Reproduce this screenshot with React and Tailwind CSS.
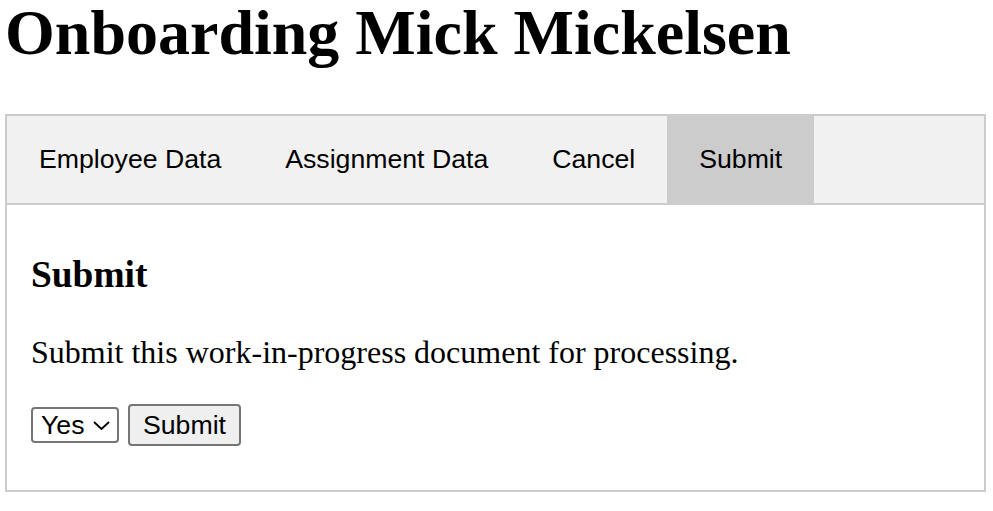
import React, { useState } from "react";

const tabs = ["Employee Data", "Assignment Data", "Cancel", "Submit"];

export default function App() {
  const [active, setActive] = useState("Submit");
  return (
    <div className="min-h-[511px] bg-white px-[5px] text-black font-['Liberation_Serif',serif]">
      <h1 className="-mt-[4px] mb-[44px] text-[64px] font-bold leading-[74px]">
        Onboarding Mick Mickelsen
      </h1>
      <div className="w-[981px]">
        <div className="flex border-2 border-[#ccc] bg-[#f1f1f1]">
          {tabs.map((t) => (
            <button
              key={t}
              onClick={() => setActive(t)}
              className={
                "px-[32px] pt-[28px] pb-[29px] text-[26.67px] leading-[30px] font-['Liberation_Sans',Arial,sans-serif] text-black " +
                (active === t ? "bg-[#ccc]" : "bg-transparent")
              }
            >
              {t}
            </button>
          ))}
        </div>
        <div className="border-2 border-t-0 border-[#ccc] px-[24px] pt-[12px] pb-[12px]">
          <h3 className="mt-[37px] mb-0 text-[37.44px] font-bold leading-[41px]">
            Submit
          </h3>
          <p className="mt-[39px] mb-0 text-[32px] leading-[37px]">
            Submit this work-in-progress document for processing.
          </p>
          <div className="mt-[33px] mb-[32px] flex h-[42px] items-center">
            <div className="relative h-[36px] w-[88px]">
              <select
                defaultValue="Yes"
                className="h-full w-full appearance-none rounded-[4px] border-2 border-[#767676] bg-white pl-[8px] pr-[30px] text-[26.67px] leading-[30px] text-black font-['Liberation_Sans',Arial,sans-serif]"
              >
                <option>Yes</option>
                <option>No</option>
              </select>
              <svg
                className="pointer-events-none absolute left-[62px] top-[14px]"
                width="17"
                height="9"
                viewBox="0 0 17 9"
                fill="none"
              >
                <path d="M1 1L8.5 8L16 1" stroke="#000" strokeWidth="1.8" />
              </svg>
            </div>
            <button className="ml-[9px] h-[42px] w-[113px] rounded-[4px] border-2 border-[#767676] bg-[#efefef] text-[26.67px] leading-[30px] text-black font-['Liberation_Sans',Arial,sans-serif]">
              Submit
            </button>
          </div>
        </div>
      </div>
    </div>
  );
}
